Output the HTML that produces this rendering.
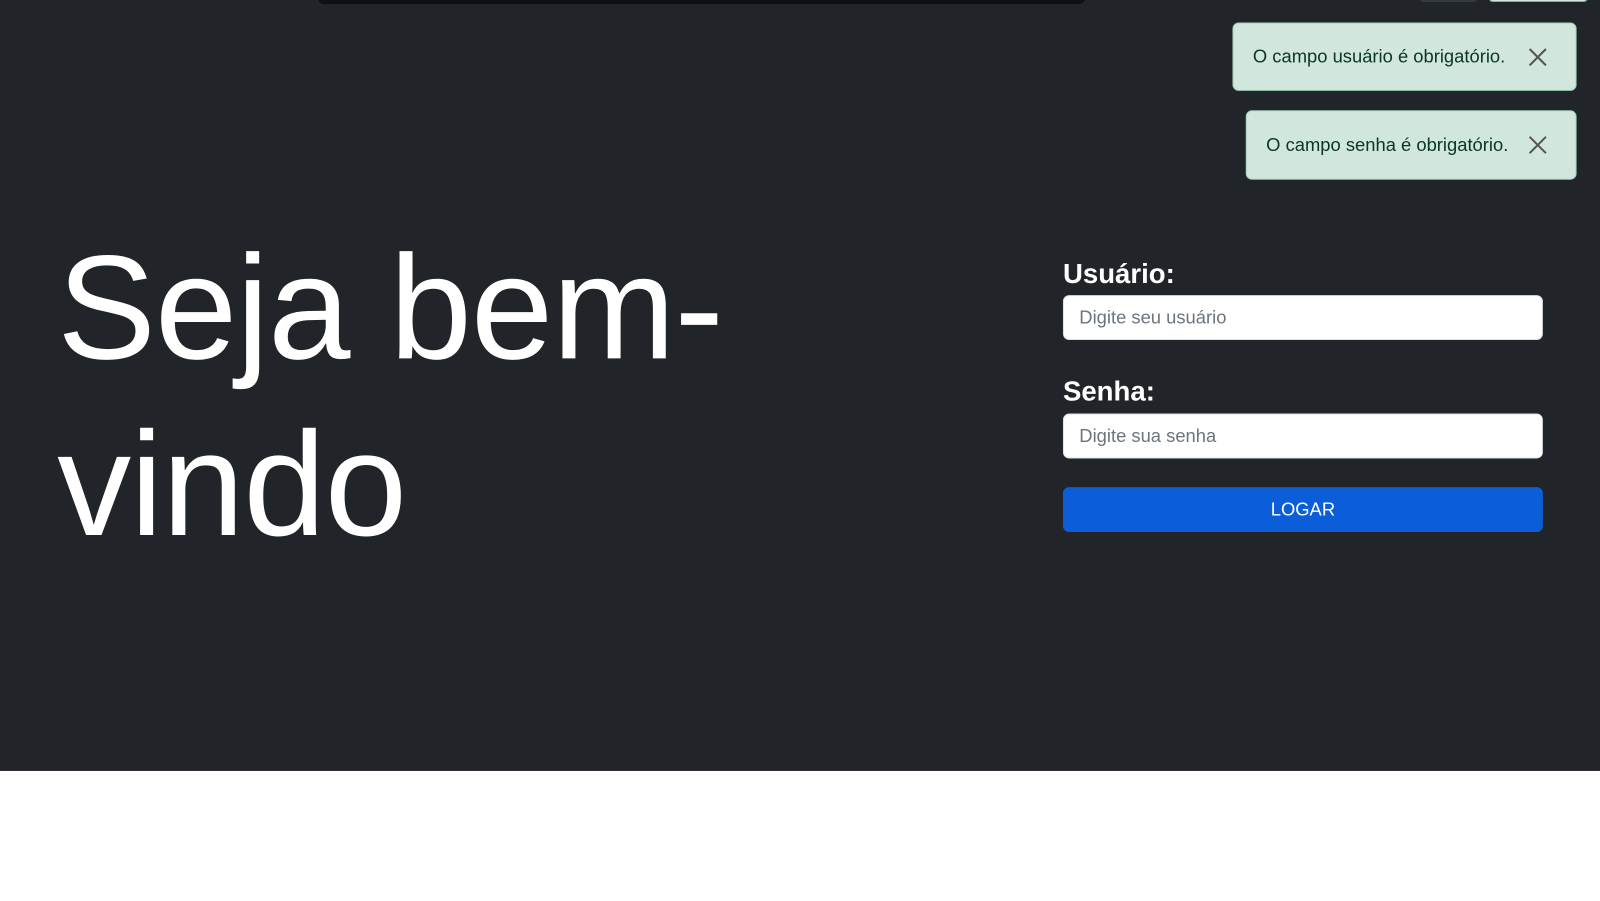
<!DOCTYPE html>
<html><head><meta charset="utf-8"><style>
*{box-sizing:border-box;margin:0;padding:0}
body{width:1600px;height:900px;background:#fff;font-family:"Liberation Sans",sans-serif;overflow:hidden}
.wrap{position:relative;width:1567px;height:882px;transform:scale(1.0211);transform-origin:0 0}
.dark{position:absolute;left:0;top:0;width:1600px;height:755px;background:#212529}
.bar{position:absolute;left:312px;top:-6px;width:750px;height:10px;background:#0e1013;border-radius:6px}
.b1{position:absolute;left:1390px;top:-6px;width:57px;height:8px;background:#343a40;border-radius:4px}
.b2{position:absolute;left:1458px;top:-6px;width:97px;height:8px;background:#d1e7dd;border:1px solid #75b798;border-radius:4px}
.toast{position:absolute;background:#d1e7dd;border:1px solid #a3cfbb;border-radius:6px;color:#0a3622;font-size:18px;display:flex;align-items:center;padding-left:19px}
.toast .x{position:absolute;right:27px;top:50%;margin-top:-10px;width:20px;height:20px}
h1{position:absolute;left:56px;top:215px;width:900px;color:#fff;font-weight:normal;font-size:145px;line-height:173px;letter-spacing:-1px}
label{position:absolute;left:1041px;color:#fff;font-weight:bold;font-size:27px}
.inp{position:absolute;left:1041px;width:470px;height:44px;background:#fff;border:1px solid #dee2e6;border-radius:6px;color:#6c757d;font-size:18px;padding-left:15px;line-height:42px}
.btn{position:absolute;left:1041px;top:477px;width:470px;height:44px;background:#0b5ed7;border-radius:6px;color:#fff;font-size:18px;text-align:center;line-height:44px}
</style></head><body><div class="wrap">
<div class="dark"></div>
<div class="bar"></div><div class="b1"></div><div class="b2"></div>
<div class="toast" style="left:1207px;top:22px;width:337px;height:67px">O campo usuário é obrigatório.
<svg class="x" viewBox="0 0 20 20"><path d="M2 2L18 18M18 2L2 18" stroke="#555" stroke-width="2"/></svg></div>
<div class="toast" style="left:1220px;top:108px;width:324px;height:68px">O campo senha é obrigatório.
<svg class="x" viewBox="0 0 20 20"><path d="M2 2L18 18M18 2L2 18" stroke="#555" stroke-width="2"/></svg></div>
<h1>Seja bem-vindo</h1>
<label style="top:253px">Usuário:</label>
<div class="inp" style="top:289px">Digite seu usuário</div>
<label style="top:368px">Senha:</label>
<div class="inp" style="top:405px">Digite sua senha</div>
<div class="btn">LOGAR</div>
</div></body></html>
